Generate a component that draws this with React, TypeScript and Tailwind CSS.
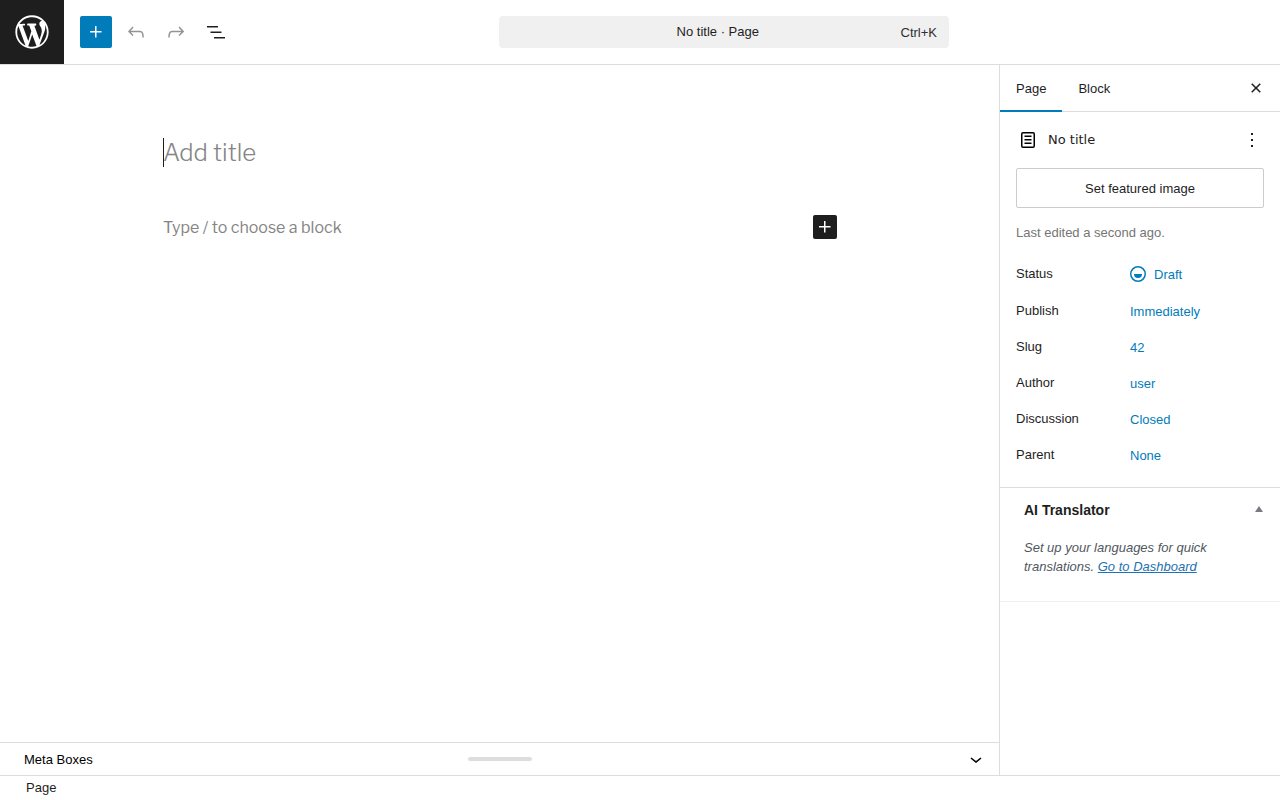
import type { ReactNode } from "react";

const ICONS = {
  wordpress:
    "M20 10c0-5.51-4.49-10-10-10C4.48 0 0 4.49 0 10c0 5.52 4.48 10 10 10 5.51 0 10-4.48 10-10zM7.78 15.37L4.37 6.22c.55-.02 1.17-.08 1.17-.08.5-.06.44-1.13-.06-1.11 0 0-1.45.11-2.37.11-.18 0-.37 0-.58-.01C4.12 2.69 6.87 1.11 10 1.11c2.33 0 4.45.87 6.05 2.34-.68-.11-1.65.39-1.65 1.58 0 .74.45 1.36.9 2.1.35.61.55 1.36.55 2.46 0 1.49-1.4 5-1.4 5l-3.03-8.37c.54-.02.82-.17.82-.17.5-.05.44-1.25-.06-1.22 0 0-1.44.12-2.38.12-.87 0-2.33-.12-2.33-.12-.5-.03-.56 1.2-.06 1.22l.92.08 1.26 3.41zM17.41 10c.24-.64.74-1.87.43-4.25.7 1.29 1.05 2.71 1.05 4.25 0 3.29-1.73 6.24-4.4 7.78.97-2.59 1.94-5.2 2.92-7.78zM6.1 18.09C3.12 16.65 1.11 13.53 1.11 10c0-1.3.23-2.48.72-3.59C3.25 10.3 4.67 14.2 6.1 18.09zm4.03-6.63l2.58 6.98c-.86.29-1.76.45-2.71.45-.79 0-1.57-.11-2.29-.33.81-2.38 1.62-4.74 2.42-7.1z",
  plus: "M11 12.5V17.5H12.5V12.5H17.5V11H12.5V6H11V11H6V12.5H11Z",
  undo: "M18.3 11.7c-.6-.6-1.4-.9-2.3-.9H6.7l2.9-3.3-1.1-1-4.5 5L8.5 16l1-1-2.7-2.7H16c.5 0 .9.2 1.3.5 1 1 1 3.4 1 4.5v.3h1.5v-.2c0-1.5 0-4.3-1.5-5.7z",
  redo: "M15.6 6.5l-1.1 1 2.9 3.3H8c-.9 0-1.7.3-2.3.9-1.4 1.5-1.4 4.2-1.4 5.6v.2h1.5v-.3c0-1.1 0-3.5 1-4.5.3-.3.7-.5 1.3-.5h9.2L14.5 15l1.1 1.1 4.6-4.6-4.6-5z",
  listView: "M3 6h11v1.5H3V6Zm3.5 5.5h11V13h-11v-1.5ZM21 17H10v1.5h11V17Z",
  close:
    "M12 13.06l3.712 3.713 1.061-1.06L13.061 12l3.712-3.712-1.06-1.06L12 10.938 8.288 7.227l-1.061 1.06L10.939 12l-3.712 3.712 1.06 1.061L12 13.061z",
  page: "M15.5 7.5h-7V9h7V7.5Zm-7 3.5h7v1.5h-7V11Zm7 3.5h-7V16h7v-1.5ZM17 4H7a2 2 0 0 0-2 2v12a2 2 0 0 0 2 2h10a2 2 0 0 0 2-2V6a2 2 0 0 0-2-2ZM7 5.5h10a.5.5 0 0 1 .5.5v12a.5.5 0 0 1-.5.5H7a.5.5 0 0 1-.5-.5V6a.5.5 0 0 1 .5-.5Z",
  more: "M13 19h-2v-2h2v2zm0-6h-2v-2h2v2zm0-6h-2V5h2v2z",
  draft:
    "M12 18.5a6.5 6.5 0 1 1 0-13 6.5 6.5 0 0 1 0 13ZM4 12a8 8 0 1 1 16 0 8 8 0 0 1-16 0Zm8 4a4 4 0 0 0 4-4H8a4 4 0 0 0 4 4Z",
  chevronDown: "M17.5 11.6L12 16l-5.5-4.4.9-1.2L12 14l4.5-3.6 1 1.2z",
};

function Icon({
  name,
  className = "size-6",
  viewBox = "0 0 24 24",
}: {
  name: keyof typeof ICONS;
  className?: string;
  viewBox?: string;
}) {
  return (
    <svg
      viewBox={viewBox}
      className={`shrink-0 ${className}`}
      fill="currentColor"
      aria-hidden="true"
    >
      <path fillRule="evenodd" clipRule="evenodd" d={ICONS[name]} />
    </svg>
  );
}

function IconButton({
  label,
  className = "size-8",
  disabled,
  children,
}: {
  label: string;
  className?: string;
  disabled?: boolean;
  children: ReactNode;
}) {
  return (
    <button
      type="button"
      aria-label={label}
      disabled={disabled}
      className={`flex shrink-0 items-center justify-center rounded-[2px] ${className}`}
    >
      {children}
    </button>
  );
}

const ROWS = [
  { label: "Publish", value: "Immediately" },
  { label: "Slug", value: "42" },
  { label: "Author", value: "user" },
  { label: "Discussion", value: "Closed" },
  { label: "Parent", value: "None" },
];

function Header() {
  return (
    <header className="flex h-[65px] shrink-0 items-center border-b border-[#ddd] bg-white">
      <a
        href="#"
        aria-label="View Pages"
        className="-mt-px flex size-16 shrink-0 items-center justify-center bg-[#1e1e1e] text-white"
      >
        <Icon name="wordpress" viewBox="-2 -2 24 24" className="size-10" />
      </a>
      <div className="flex shrink-0 gap-2 pl-4">
        <IconButton label="Block Inserter" className="size-8 bg-[#007cba] text-white">
          <Icon name="plus" />
        </IconButton>
        <IconButton label="Undo" disabled className="size-8 text-[#949494]">
          <Icon name="undo" />
        </IconButton>
        <IconButton label="Redo" disabled className="size-8 text-[#949494]">
          <Icon name="redo" />
        </IconButton>
        <IconButton label="Document Overview">
          <Icon name="listView" />
        </IconButton>
      </div>
      <div className="flex min-w-0 flex-1 justify-center pr-32 pl-16">
        <button
          type="button"
          className="flex h-8 w-full max-w-[450px] items-center rounded bg-[#f0f0f0] pr-3 pl-9"
        >
          <span className="flex-1 pb-0.5 text-center">No title · Page</span>
          <span className="text-[#2f2f2f]">Ctrl+K</span>
        </button>
      </div>
    </header>
  );
}

function Canvas() {
  return (
    <main className="flex-1 overflow-auto px-8 pt-[73px] font-['Libre_Franklin','Inter',sans-serif]">
      <div className="mx-auto max-w-[674px]">
        <div className="relative">
          <input
            aria-label="Add title"
            placeholder="Add title"
            className="block h-[29px] w-full text-2xl leading-7 font-light outline-none placeholder:text-[#858585]"
          />
          <span className="absolute inset-y-0 left-0 w-px bg-[#1e1e1e]" />
        </div>
        <div className="mt-12 flex h-6 items-center">
          <input
            aria-label="Empty block"
            placeholder="Type / to choose a block"
            className="min-w-0 flex-1 pt-0.5 text-base outline-none placeholder:text-[#858585]"
          />
          <IconButton label="Add block" className="size-6 bg-[#1e1e1e] text-white">
            <Icon name="plus" />
          </IconButton>
        </div>
      </div>
    </main>
  );
}

function Sidebar() {
  return (
    <aside className="-ml-px w-[281px] shrink-0 overflow-auto border-l border-[#ddd] bg-white">
      <div className="flex h-[47px] items-center border-b border-[#ddd] pr-2">
        <div role="tablist" className="flex flex-1 self-stretch">
          <button
            type="button"
            role="tab"
            aria-selected="true"
            className="-mb-px border-b-2 border-[#007cba] px-4 pt-0.5"
          >
            Page
          </button>
          <button type="button" role="tab" aria-selected="false" className="px-4">
            Block
          </button>
        </div>
        <IconButton label="Close Settings">
          <Icon name="close" />
        </IconButton>
      </div>

      <section className="border-b border-[#ddd] p-4">
        <div className="flex h-6 items-center gap-2">
          <Icon name="page" className="size-6 text-black" />
          <h2 className="flex-1 pb-0.5 font-['DejaVu_Sans',sans-serif]">No title</h2>
          <IconButton label="Actions" className="size-6">
            <Icon name="more" />
          </IconButton>
        </div>
        <button
          type="button"
          className="mt-4 h-10 w-full rounded-[2px] border border-[#ccc]"
        >
          Set featured image
        </button>
        <p className="mt-[15px] text-[#757575]">Last edited a second ago.</p>

        <div className="mt-4">
          <div className="mb-[5px] flex h-8 items-center">
            <span className="w-[110px] pb-0.5">Status</span>
            <button type="button" className="flex h-8 items-center gap-1 text-[#007cba]">
              <Icon name="draft" />
              Draft
            </button>
          </div>
          <div className="space-y-1">
            {ROWS.map((row) => (
              <div key={row.label} className="flex h-8 items-center">
                <span className="w-[106px] pb-0.5">{row.label}</span>
                <button type="button" className="h-8 px-2 text-[#007cba]">
                  {row.value}
                </button>
              </div>
            ))}
          </div>
        </div>
      </section>

      <section className="border-b border-[#f0f0f0] pb-[25px]">
        <button
          type="button"
          aria-expanded="true"
          className="flex h-11 w-full items-center justify-between pr-4 pl-6 text-sm font-bold"
        >
          AI Translator
          <svg viewBox="0 0 10 8" className="h-2 w-2.5 text-[#787c82]" fill="currentColor" aria-hidden="true">
            <path d="M5 0l4 6H1z" />
          </svg>
        </button>
        <p className="px-6 pt-1.5 text-[#50575e] italic">
          Set up your languages for quick translations.{" "}
          <a href="#" className="text-[#2271b1] underline">
            Go to Dashboard
          </a>
        </p>
      </section>
    </aside>
  );
}

export default function App() {
  return (
    <div className="flex h-screen flex-col bg-white font-['Liberation_Sans',Arial,sans-serif] text-[13px] leading-[19px] text-[#1e1e1e]">
      <Header />
      <div className="flex min-h-0 flex-1">
        <div className="flex min-w-0 flex-1 flex-col">
          <Canvas />
          <div className="relative flex h-[33px] shrink-0 items-center border-t border-[#ddd]">
            <button
              type="button"
              className="flex h-full w-full items-center justify-between pr-3 pl-6 text-black"
            >
              Meta Boxes
              <Icon name="chevronDown" />
            </button>
            <span className="absolute inset-x-0 top-3.5 mx-auto h-1 w-16 rounded-full bg-[#ddd]" />
          </div>
        </div>
        <Sidebar />
      </div>
      <footer className="flex h-[25px] shrink-0 items-center border-t border-[#ddd] px-6 pb-0.5">
        <span className="px-0.5">Page</span>
      </footer>
    </div>
  );
}
